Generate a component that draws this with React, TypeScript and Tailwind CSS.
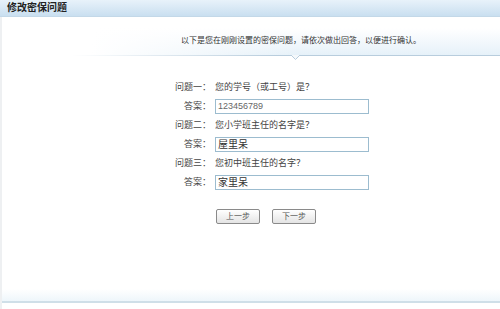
import React from 'react';

const font = { fontFamily: '"Liberation Sans", "Noto Sans CJK SC", sans-serif' };

interface QA {
  label: string;
  question: string;
  answer: string;
  muted?: boolean;
}

const items: QA[] = [
  { label: '问题一：', question: '您的学号（或工号）是？', answer: '123456789', muted: true },
  { label: '问题二：', question: '您小学班主任的名字是？', answer: '屋里呆' },
  { label: '问题三：', question: '您初中班主任的名字？', answer: '家里呆' },
];

const App: React.FC = () => {
  return (
    <div className="w-[500px] h-[309px] bg-white flex flex-col text-[#333]" style={font}>
      {/* title bar */}
      <div className="h-[17px] shrink-0 flex items-center pl-[7px] bg-gradient-to-b from-[#e8f2fa] to-[#c9dff0] border-b border-[#c3d8e8]">
        <span className="text-[10px] font-bold text-[#222] leading-none">修改密保问题</span>
      </div>

      <div className="flex-1 flex flex-col border-l-2 border-[#eef0f2]">
        {/* notice */}
        <div className="h-[38px] shrink-0 pl-[179px] pt-[19px] bg-[linear-gradient(to_right,#ffffff_18%,rgba(255,255,255,0)_60%),linear-gradient(to_bottom,#ffffff_30%,#e6f1f9)]">
          <p className="text-[8px] leading-[10px] text-[#333] whitespace-nowrap">
            以下是您在刚刚设置的密保问题，请依次做出回答，以便进行确认。
          </p>
        </div>
        <div className="relative h-px shrink-0 bg-[linear-gradient(to_right,#ffffff_14%,#b8cddd_55%)]">
          <svg className="absolute left-[289px] top-0" width="9" height="5" viewBox="0 0 9 5">
            <path d="M0 0 L4.5 4.5 L9 0" fill="#f4f8fb" stroke="#b8cddd" strokeWidth="1" />
          </svg>
        </div>

        {/* questions */}
        <div className="mt-[22px] grid grid-cols-[209px_auto] gap-x-[4px] text-[9px]">
          {items.map((it) => (
            <React.Fragment key={it.label}>
              <div className="h-[19px] flex items-center justify-end text-[#444]">{it.label}</div>
              <div className="h-[19px] flex items-center text-[#444]">{it.question}</div>
              <div className="h-[19px] flex items-center justify-end text-[#444]">答案：</div>
              <div className="h-[19px] flex items-center">
                <div
                  className={`w-[154px] h-[15px] border border-[#9cbccf] bg-white flex items-center px-[2px] leading-none ${
                    it.muted ? 'text-[9px] text-[#666]' : 'text-[10px] text-[#333]'
                  }`}
                >
                  {it.answer}
                </div>
              </div>
            </React.Fragment>
          ))}
        </div>

        {/* buttons */}
        <div className="mt-[17px] pl-[214px] flex gap-[12px]">
          {['上一步', '下一步'].map((b) => (
            <button
              key={b}
              className="w-[44px] h-[15px] rounded-[2px] border border-[#8a8a8a] bg-gradient-to-b from-white to-[#e4e4e4] text-[8px] text-[#555] leading-none flex items-center justify-center"
            >
              {b}
            </button>
          ))}
        </div>

        <div className="flex-1" />
        <div className="h-[12px] shrink-0 bg-gradient-to-b from-white to-[#eef6fb]" />
        <div className="h-[2px] shrink-0 bg-[#cfdfe8]" />
        <div className="h-[6px] shrink-0 bg-white" />
      </div>
    </div>
  );
};

export default App;
